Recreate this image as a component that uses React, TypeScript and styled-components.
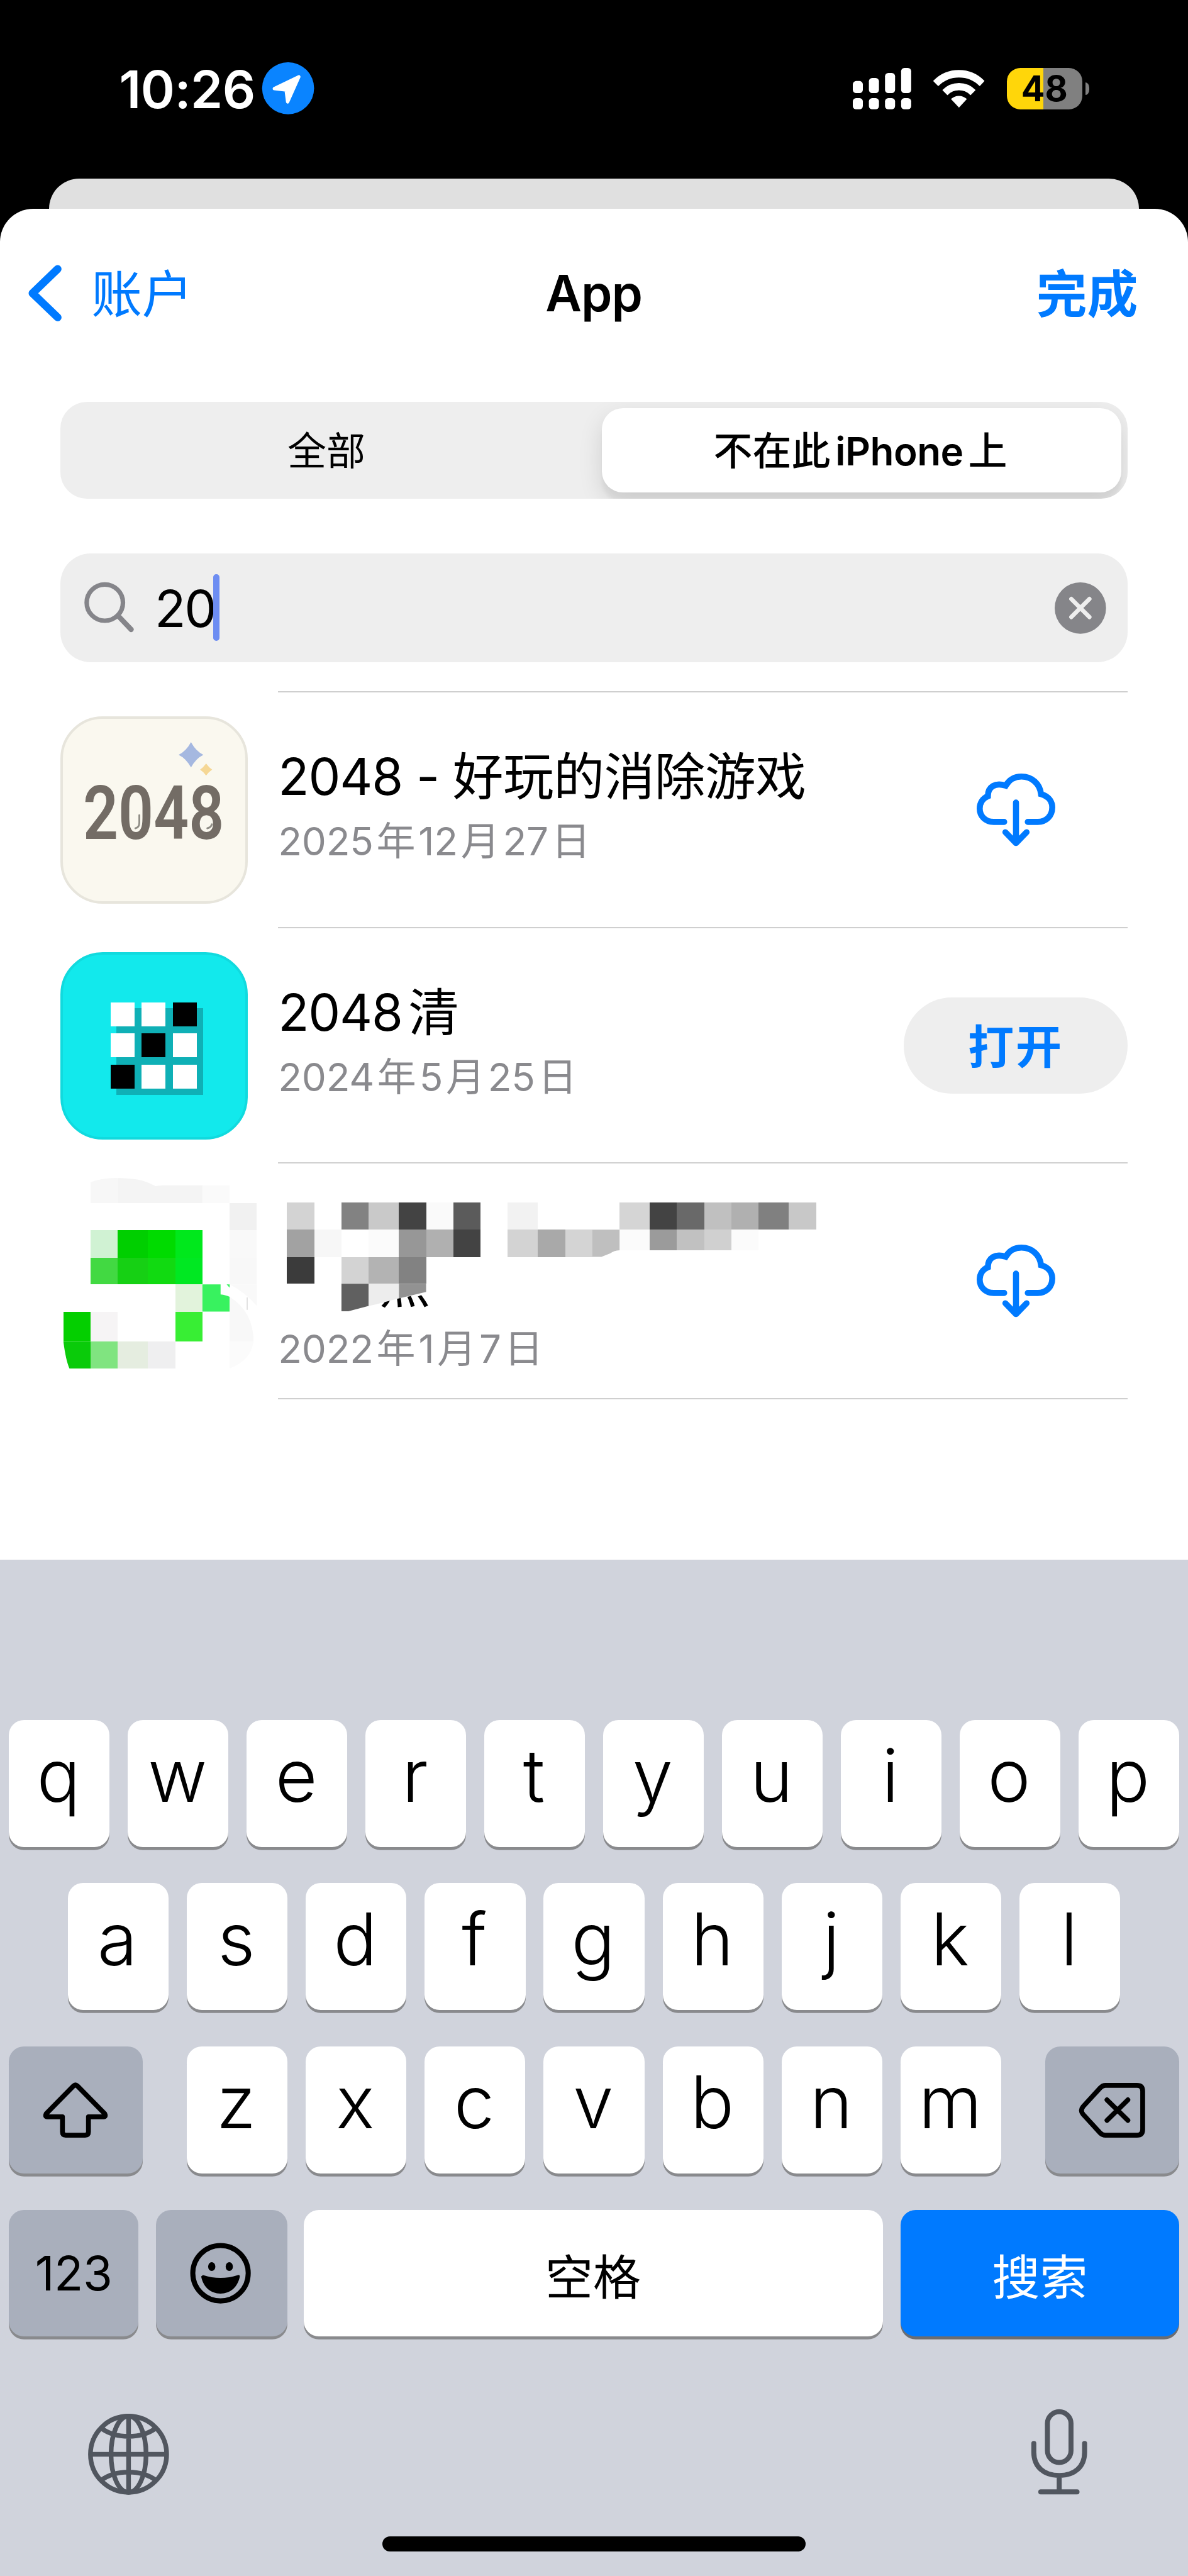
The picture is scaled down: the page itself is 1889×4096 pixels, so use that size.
import React from "react";
import styled, { createGlobalStyle, css } from "styled-components";

/* One iOS point on this 393pt-wide canvas. */
const pt = (n: number) => `${+(n * (1889 / 393)).toFixed(3)}px`;

const BLUE = "#007aff";
const FONT = `Inter, "Noto Sans CJK SC", "Liberation Sans", sans-serif`;

const Global = createGlobalStyle`
  html, body { margin: 0; padding: 0; background: #000; }
  * { box-sizing: border-box; }
  button { border: 0; padding: 0; margin: 0; background: none; font: inherit; color: inherit; }
  svg { display: block; flex: none; }
`;

const Screen = styled.div`
  width: ${pt(393)};
  height: 4096px;
  overflow: hidden;
  display: flex;
  flex-direction: column;
  background: #000;
  color: #000;
  font-family: ${FONT};
`;

/* ---------- status bar ---------- */

const StatusBar = styled.header`
  height: ${pt(59)};
  flex: none;
  display: flex;
  align-items: flex-start;
  justify-content: space-between;
  padding: ${pt(20.7)} ${pt(32.4)} 0 ${pt(39.4)};
`;

const StatusGroup = styled.div<{ $gap: number }>`
  height: ${pt(17.2)};
  display: flex;
  align-items: center;
  gap: ${(p) => pt(p.$gap)};
`;

const Clock = styled.span`
  width: ${pt(44.5)};
  color: #fff;
  font-size: ${pt(17.1)};
  font-weight: 600;
  letter-spacing: ${pt(-0.1)};
  line-height: 1;
  padding-top: ${pt(0.4)};
  white-space: nowrap;
`;

const Battery = styled.div`
  width: ${pt(27.6)};
  height: ${pt(13.7)};
  display: flex;
  align-items: center;
  gap: ${pt(1)};
`;

const BatteryBody = styled.div`
  width: ${pt(25)};
  height: ${pt(13.7)};
  border-radius: ${pt(4.5)};
  background: linear-gradient(90deg, #ffd60a 0 48%, #808080 48% 100%);
  display: flex;
  align-items: center;
  justify-content: center;
  color: #000;
  font-size: ${pt(11.6)};
  font-weight: 700;
  line-height: 1;
`;

const BatteryNub = styled.div`
  width: ${pt(1.4)};
  height: ${pt(4.1)};
  border-radius: 0 ${pt(1.4)} ${pt(1.4)} 0 / 0 50% 50% 0;
  background: #808080;
`;

/* ---------- sheet ---------- */

const BackCard = styled.div`
  flex: none;
  height: ${pt(10)};
  margin: 0 ${pt(16.3)};
  border-radius: ${pt(10)} ${pt(10)} 0 0;
  background: #e0e0e0;
`;

const Sheet = styled.main`
  flex: none;
  height: ${pt(447)};
  border-radius: ${pt(11)} ${pt(11)} 0 0;
  background: #fff;
`;

const NavBar = styled.nav`
  height: ${pt(56)};
  display: grid;
  grid-template-columns: 1fr auto 1fr;
  align-items: center;
  padding: 0 ${pt(16.6)} 0 ${pt(9.3)};
  line-height: 1;
`;

const BackButton = styled.button`
  display: flex;
  align-items: center;
  gap: ${pt(9.4)};
  color: ${BLUE};
  font-size: ${pt(16.8)};
`;

const BackLabel = styled.span`
  padding-top: ${pt(1)};
`;

const NavTitle = styled.h1`
  margin: 0 ${pt(-3.6)} 0 ${pt(3.6)};
  font-size: ${pt(16.5)};
  font-weight: 600;
  letter-spacing: ${pt(-0.2)};
`;

const DoneButton = styled.button`
  justify-self: end;
  padding-top: ${pt(1)};
  color: ${BLUE};
  font-size: ${pt(16.8)};
  font-weight: 700;
`;

const Segments = styled.div`
  height: ${pt(32)};
  margin: ${pt(8)} ${pt(20)} 0;
  padding: ${pt(2)};
  display: grid;
  grid-template-columns: 177fr 172fr;
  border-radius: ${pt(8.8)};
  background: #eeeeee;
  overflow: hidden;
`;

const Segment = styled.button<{ $active?: boolean }>`
  display: flex;
  align-items: center;
  justify-content: center;
  border-radius: ${pt(7)};
  font-size: ${pt(12.9)};
  line-height: 1;
  padding: ${pt(0.8)} ${pt(5)} 0 0;
  ${(p) =>
    p.$active &&
    css`
      padding-right: ${pt(0.8)};
      background: #fff;
      font-weight: 600;
      box-shadow: 0 ${pt(3)} ${pt(8)} rgba(0, 0, 0, 0.12), 0 ${pt(3)} ${pt(1)} rgba(0, 0, 0, 0.04);
    `}
`;

const SearchField = styled.div`
  height: ${pt(36)};
  margin: ${pt(18)} ${pt(20)} 0;
  padding: 0 ${pt(7.1)} 0 ${pt(7.8)};
  display: flex;
  align-items: center;
  border-radius: ${pt(10)};
  background: #eeeeee;
`;

const Query = styled.span`
  margin-left: ${pt(6.8)};
  width: ${pt(19.4)};
  padding-top: ${pt(0.6)};
  font-size: ${pt(16.9)};
  letter-spacing: ${pt(-0.5)};
  line-height: 1;
  white-space: nowrap;
`;

const Caret = styled.i`
  width: ${pt(2)};
  height: ${pt(22)};
  border-radius: ${pt(1)};
  background: #6d8df2;
  margin-right: auto;
`;

/* ---------- app list ---------- */

const AppList = styled.ul`
  list-style: none;
  margin: ${pt(9.67)} ${pt(20)} 0;
  padding: 0;
`;

const AppRow = styled.li`
  height: ${pt(78)};
  display: grid;
  grid-template-columns: ${pt(62)} 1fr;
  column-gap: ${pt(10)};
  align-items: center;
`;

const IconSlot = styled.div`
  padding-top: ${pt(0.66)};
`;

const AppBody = styled.div<{ $last?: boolean }>`
  height: 100%;
  display: flex;
  align-items: center;
  justify-content: space-between;
  border-top: 2px solid #cfcfcf;
  ${(p) =>
    p.$last &&
    css`
      height: calc(100% + 2px);
      border-bottom: 2px solid #cfcfcf;
    `}
`;

const AppText = styled.div`
  display: flex;
  flex-direction: column;
  gap: ${pt(1.9)};
  padding-bottom: ${pt(1.6)};
  white-space: nowrap;
`;

const AppName = styled.div`
  height: ${pt(21)};
  line-height: ${pt(21)};
  font-size: ${pt(16.8)};
`;

const AppDate = styled.div`
  height: ${pt(18)};
  line-height: ${pt(18)};
  font-size: ${pt(12.9)};
  color: #8a8a8e;
`;

const Run = styled.span<{ $track: number; $before: number; $weight?: number }>`
  letter-spacing: ${(p) => pt(p.$track)};
  margin-left: ${(p) => pt(p.$before)};
  ${(p) => p.$weight && css`font-weight: ${p.$weight};`}
`;

const ActionSlot = styled.div`
  width: ${pt(74)};
  display: flex;
  justify-content: center;
`;

const OpenButton = styled.button`
  width: ${pt(74)};
  height: ${pt(32)};
  border-radius: ${pt(16)};
  padding-top: ${pt(0.8)};
  background: #eeeeee;
  color: ${BLUE};
  font-size: ${pt(15.2)};
  font-weight: 700;
  line-height: 1;
  letter-spacing: ${pt(0.6)};
`;

const Tile = styled.div<{ $bg: string; $edge: string }>`
  width: ${pt(62)};
  height: ${pt(62)};
  border-radius: ${pt(14)};
  overflow: hidden;
  background: ${(p) => p.$bg};
  border: ${pt(1)} solid ${(p) => p.$edge};
`;

/* ---------- keyboard ---------- */

const Keyboard = styled.section`
  flex: 1;
  display: flex;
  flex-direction: column;
  align-items: stretch;
  padding: ${pt(53)} ${pt(3)} 0;
  background: #d0d3dc;
`;

const KeyRow = styled.div<{ $inset?: number }>`
  height: ${pt(42)};
  margin-bottom: ${pt(12)};
  padding: 0 ${(p) => pt(p.$inset ?? 0)};
  display: flex;
  gap: ${pt(6)};
`;

const LetterGroup = styled.div`
  flex: 1;
  display: flex;
  gap: ${pt(6)};
  margin: 0 ${pt(8.4)};
`;

const Key = styled.button<{ $w?: number; $tone?: "light" | "dark" | "blue" }>`
  ${(p) => (p.$w ? css`flex: none; width: ${pt(p.$w)};` : css`flex: 1 1 0; min-width: 0;`)}
  height: ${pt(42)};
  display: flex;
  align-items: center;
  justify-content: center;
  border-radius: ${pt(5)};
  line-height: 1;
  background: ${(p) => (p.$tone === "dark" ? "#a9afbc" : p.$tone === "blue" ? BLUE : "#fff")};
  color: ${(p) => (p.$tone === "blue" ? "#fff" : "#000")};
  box-shadow: 0 ${pt(1)} 0 ${(p) => (p.$tone === "blue" ? "#6b6d72" : "#898a8d")};
`;

const SpaceKey = styled(Key)`
  margin-left: ${pt(-0.6)};
`;

const Letter = styled.span`
  font-size: ${pt(24)};
  font-weight: 340;
  padding: 0 ${pt(0.5)} ${pt(5)} 0;
`;

const Label = styled.span<{ $cjk?: boolean }>`
  font-size: ${(p) => pt(p.$cjk ? 15.8 : 15.8)};
  letter-spacing: ${(p) => pt(p.$cjk ? 0 : -0.1)};
  padding-top: ${(p) => pt(p.$cjk ? 3 : 0)};
`;

const DockRow = styled.div`
  height: ${pt(30)};
  margin-top: ${pt(10.9)};
  padding: 0 ${pt(30.2)} 0 ${pt(26.1)};
  display: flex;
  align-items: center;
  justify-content: space-between;
`;

const GlobeSlot = styled.div`
  padding-top: ${pt(2)};
`;

const HomeIndicator = styled.div`
  width: ${pt(140)};
  height: ${pt(5)};
  margin: ${pt(13.1)} auto 0;
  border-radius: ${pt(2.5)};
  background: #000;
`;

/* ---------- drawings: every viewBox is in points ---------- */

type ArtProps = { box: [number, number, number, number]; children: React.ReactNode };
const Art = ({ box, children }: ArtProps) => (
  <svg width={pt(box[2])} height={pt(box[3])} viewBox={box.join(" ")} fill="none" overflow="visible">
    {children}
  </svg>
);

const LocationBadge = () => (
  <Art box={[86.7, 20.7, 17.1, 17.2]}>
    <circle cx="95.25" cy="29.3" r="8.6" fill="#0a84ff" />
    <path d="M98.8 25.5 95.1 33.8 94.6 29.9 90.7 29.4Z" fill="#fff" stroke="#fff" strokeWidth="1.1" strokeLinejoin="round" />
  </Art>
);

const SIGNAL = [26.67, 25.67, 24, 22.33];
const SignalIcon = () => (
  <Art box={[282, 22.33, 19.4, 13.7]}>
    {SIGNAL.map((top, i) => (
      <g key={top} fill="#fff">
        <rect x={282 + i * 5.33} y={top} width="3.33" height={30.67 - top} rx="1.1" />
        <rect x={282 + i * 5.33} y="32.33" width="3.33" height="3.67" rx="1.1" />
      </g>
    ))}
  </Art>
);

const WifiIcon = () => (
  <Art box={[308.7, 22.9, 16.9, 12.5]}>
    <g fill="#fff" stroke="#fff" strokeWidth="0.3" strokeLinejoin="round">
      <path d="M308.85 26.6A11.6 11.6 0 0 1 325.45 26.6L324.05 28.1A9.8 9.8 0 0 0 310.35 28.1Z" />
      <path d="M311.9 29.6A7.5 7.5 0 0 1 322.5 29.6L321 31.1A5.4 5.4 0 0 0 313.4 31.1Z" />
      <path d="M314.75 32.6A3.6 3.6 0 0 1 319.6 32.6L317.2 35.2Z" />
    </g>
  </Art>
);

const BackChevron = () => (
  <Art box={[9.3, 87.5, 11.5, 18.8]}>
    <path d="M19 88.9 10.7 96.9 19 104.9" stroke={BLUE} strokeWidth="2.6" strokeLinecap="round" strokeLinejoin="round" />
  </Art>
);

const SearchIcon = () => (
  <Art box={[28, 192.7, 16.6, 17.2]}>
    <g stroke="#85858a" strokeWidth="1.5" strokeLinecap="round">
      <circle cx="34.8" cy="199.6" r="6" />
      <path d="M39.4 204.2 43.5 208.5" strokeWidth="1.7" />
    </g>
  </Art>
);

const ClearIcon = () => (
  <Art box={[348.9, 192.4, 17, 17]}>
    <circle cx="357.4" cy="201.1" r="8.5" fill="#858589" />
    <path d="M354.4 198.1 360.4 204.1M360.4 198.1 354.4 204.1" stroke="#eee" strokeWidth="1.4" strokeLinecap="round" />
  </Art>
);

const CloudDownload = () => (
  <Art box={[323, 256, 26, 24]}>
    <g stroke={BLUE} strokeWidth="2" strokeLinecap="round" strokeLinejoin="round">
      <path
        d="M332.1 272H328.6C325.8 272 324 270 324 267.6 324 265.7 325 264.2 326.7 263.5 326.7 260.2 329.3 258.9 332.6 260 333.8 258 335.7 257 337.8 257 341.3 257 343.9 259.4 344.3 262.8 346.7 263.5 348 265.2 348 267.2 348 270 346 272 343.2 272H339.9"
        strokeLinejoin="miter"
      />
      <path d="M336 265.6V278.9M332.5 275.4 336 279 339.5 275.4" />
    </g>
  </Art>
);

const TileLabel = styled.div`
  width: ${pt(60)};
  height: ${pt(18)};
  margin-top: ${pt(5.9)};
  display: flex;
  align-items: center;
  justify-content: center;
  font-family: Roboto, "Liberation Sans", sans-serif;
  font-size: ${pt(24.6)};
  font-weight: 600;
  line-height: 1;
  color: #736c65;
  transform: scaleX(0.83);
`;

const SparkleRow = styled.div`
  padding: ${pt(7.6)} 0 0 ${pt(38.2)};
`;

const MergeTile = () => (
  <Tile $bg="#faf8ef" $edge="#e7e5dc">
    <SparkleRow>
      <Art box={[59.2, 245.6, 11.5, 9]}>
        <path d="M63.3 245.6Q64.9 248.6 67.4 249.8 64.9 251 63.3 254 61.7 251 59.2 249.8 61.7 248.6 63.3 245.6Z" fill="#a5b8e0" />
        <path d="M68.3 252.7Q69.2 254 70.3 254.7 69.2 255.4 68.3 256.7 67.4 255.4 66.3 254.7 67.4 254 68.3 252.7Z" fill="#f5d795" />
        <path d="M46.2 269.8V272.3Q46.2 273.9 44.9 274.1M70.2 272.8Q69.9 273.9 68.7 274.1" stroke="#8f8d86" strokeWidth="0.6" strokeLinecap="round" />
      </Art>
    </SparkleRow>
    <TileLabel>2048</TileLabel>
  </Tile>
);

const GRID = [0, 0, 1, 0, 1, 0, 1, 0, 0];
const PuzzleBoard = styled.div`
  width: ${pt(28.6)};
  height: ${pt(28.5)};
  margin: ${pt(15.8)} 0 0 ${pt(15.7)};
  display: grid;
  grid-template-columns: repeat(3, ${pt(7.9)});
  grid-auto-rows: ${pt(7.9)};
  gap: ${pt(2.4)};
  background: linear-gradient(#0fb0b6, #0fb0b6) ${pt(1.9)} ${pt(1.9)} no-repeat;
  padding: 0 ${pt(2)} ${pt(2)} 0;
  box-sizing: content-box;
`;
const PuzzleCell = styled.i<{ $on: boolean }>`
  background: ${(p) => (p.$on ? "#000" : "#fff")};
`;

const PuzzleTile = () => (
  <Tile $bg="#12e9ec" $edge="#11dade">
    <PuzzleBoard>
      {GRID.map((v, i) => (
        <PuzzleCell key={i} $on={v === 1} />
      ))}
    </PuzzleBoard>
  </Tile>
);

type Cell = [x0: number, x1: number, y0: number, y1: number, fill: string];
const Cells = ({ data }: { data: Cell[] }) => (
  <g shapeRendering="crispEdges">
    {data.map(([x0, x1, y0, y1, fill], i) => (
      <rect key={i} x={x0} y={y0} width={x1 - x0} height={y1 - y0} fill={fill} />
    ))}
  </g>
);

const ICON_CELLS: Cell[] = [
  [76, 85, 398, 407, "#f1f1f1"],
  [30, 39, 407, 416, "#d0f2d3"],
  [39, 49, 407, 416, "#00cf00"],
  [49, 58, 407, 416, "#00db00"],
  [58, 67, 407, 416, "#00e81c"],
  [76, 85, 407, 416, "#f9f9f9"],
  [30, 39, 416, 424.9, "#42d942"],
  [39, 49, 416, 424.9, "#16d014"],
  [49, 58, 416, 424.9, "#11da11"],
  [58, 67, 416, 424.9, "#00e822"],
  [76, 85, 416, 424.9, "#f8f8f8"],
  [58, 67, 424.9, 433.9, "#e2f3dc"],
  [21, 30, 433.9, 443.8, "#04cf00"],
  [30, 39, 433.9, 443.8, "#f6f4f5"],
  [58, 67, 433.9, 443.8, "#38ee34"],
  [30, 39, 443.8, 452.7, "#80e480"],
  [39, 49, 443.8, 452.7, "#e5ede0"],
  [49, 58, 443.8, 452.7, "#efeff0"],
];

const MosaicIcon = () => (
  <Art box={[20, 393, 62, 62]}>
    <path d="M30 391.1Q34 389.6 39 389.7V398H30Z" fill="#f7f7f7" />
    <path d="M39 389.7C45 389.8 48 390.4 51.5 392.4L54 392.1H67V398H39Z" fill="#f4f4f4" />
    <path d="M67 392.1H76V398H67Z" fill="#fafafa" />
    <Cells data={ICON_CELLS} />
    <path d="M67 424.9H73V428.2Q74.8 428.4 76 429V433.9H67Z" fill="#38f25f" />
    <path d="M75 424.9H76V426Z" fill="#38f25f" />
    <path d="M76 424.9H85V432Q81 427.4 76 424.9Z" fill="#f9f9f9" />
    <path d="M76 429Q83.9 434 83.9 443.8H76Z" fill="#f8f8f8" />
    <path d="M76 443.8H83.9Q83 450 76 452.7Z" fill="#fbfbfb" />
    <path d="M81.8 429.2V433.3" stroke="#dedede" strokeWidth="0.35" />
    <path d="M21 443.8H30V452.7H23Q21.8 450 21 443.8Z" fill="#0acb0a" />
  </Art>
);

const NAME_CELLS: Cell[] = [
  [95, 104, 398, 407, "#d3d3d3"],
  [113, 122, 398, 407, "#828282"],
  [122, 132, 398, 407, "#c9c9c9"],
  [132, 141, 398, 407, "#434343"],
  [141, 150, 398, 407, "#fafafa"],
  [150, 159, 398, 407, "#5b5b5b"],
  [168, 178, 398, 407, "#f2f2f2"],
  [205, 215, 398, 407, "#d5d5d5"],
  [215, 224, 398, 407, "#434343"],
  [224, 233, 398, 407, "#696969"],
  [233, 242, 398, 407, "#c0c0c0"],
  [242, 251, 398, 407, "#b0b0b0"],
  [251, 261, 398, 407, "#808080"],
  [261, 270, 398, 407, "#c8c8c8"],
  [95, 104, 407, 416, "#a2a2a2"],
  [104, 113, 407, 416, "#f7f7f7"],
  [122, 132, 407, 416, "#fbfbfb"],
  [132, 141, 407, 416, "#979797"],
  [141, 150, 407, 416, "#b0b0b0"],
  [150, 159, 407, 416, "#434343"],
  [168, 178, 407, 416, "#d3d3d3"],
  [178, 187, 407, 416, "#a9a9a9"],
  [187, 196, 407, 416, "#d4d4d4"],
  [205, 215, 407, 413.7, "#fbfbfb"],
  [215, 224, 407, 413.7, "#9b9b9b"],
  [224, 233, 407, 413.7, "#c1c1c1"],
  [233, 242, 407, 413.7, "#d0d0d0"],
  [242, 251, 407, 413.7, "#fbfbfb"],
  [95, 104, 416, 424.9, "#3b3b3b"],
  [113, 122, 416, 424.9, "#d3d3d3"],
  [122, 132, 416, 424.9, "#b3b3b3"],
  [132, 141, 416, 424.9, "#828282"],
];

const MosaicName = () => (
  <Art box={[92, 390.5, 180, 45.1]}>
    <Cells data={NAME_CELLS} />
    <path d="M196 407H205V413.8Q203 413.9 202 414.8L199 416H196Z" fill="#bfbfbf" />
    <path d="M113 424.9H122V432.2L115.3 434H113Z" fill="#606060" />
    <path d="M122 424.9H132V429.7L124 431.8 122 432.2Z" fill="#ededed" />
    <path d="M132 424.9H141V427.6L132 429.7Z" fill="#929292" />
    <clipPath id="uncovered">
      <path d="M122 432.2 124 431.8 132 429.7 141 427.6H144V436H122Z" />
    </clipPath>
    <text x="125.5" y="431.3" fontSize="17" fill="#000" fontFamily="Noto Sans CJK SC, sans-serif" clipPath="url(#uncovered)">
      点
    </text>
  </Art>
);

const ShiftIcon = () => (
  <Art box={[14.5, 688.9, 21.2, 18]}>
    <path
      d="M24.25 689.9Q24.9 689.3 25.55 689.9L34.6 699.1Q35.1 700.1 34.2 700.1H29.2V705.1Q29.2 706.2 28.1 706.2H21.7Q20.6 706.2 20.6 705.1V700.1H15.6Q14.7 700.1 15.2 699.1Z"
      stroke="#000"
      strokeWidth="1.6"
      strokeLinejoin="round"
    />
  </Art>
);

const DeleteIcon = () => (
  <Art box={[356.9, 689, 21.8, 18]}>
    <g stroke="#000" strokeWidth="1.6" strokeLinecap="round" strokeLinejoin="round">
      <path d="M365.6 689.8H376Q377.9 689.8 377.9 691.7V704.4Q377.9 706.3 376 706.3H365.6Q364.6 706.3 363.9 705.6L358.2 699.4Q357.1 698.1 358.2 696.8L363.9 690.6Q364.6 689.8 365.6 689.8Z" />
      <path d="M366.1 694.6 373 701.4M373 694.6 366.1 701.4" />
    </g>
  </Art>
);

const EmojiIcon = () => (
  <Art box={[63.3, 741.9, 20, 20.2]}>
    <circle cx="73" cy="752" r="9.17" stroke="#000" strokeWidth="1.67" />
    <ellipse cx="70.1" cy="749.8" rx="1.2" ry="1.45" fill="#000" />
    <ellipse cx="75.9" cy="749.8" rx="1.2" ry="1.45" fill="#000" />
    <path
      d="M67.2 752.6Q73 754.5 78.8 752.6 79.4 752.4 79.4 753.1C78.7 756.6 76.3 758.75 73 758.75 69.7 758.75 67.3 756.6 66.6 753.1 66.6 752.4 67.2 752.6ZM67.65 753.7Q67.7 754.4 68.2 755 73 756.3 77.8 755 78.3 754.4 78.35 753.7 73 755.2 67.65 753.7Z"
      fill="#000"
      fillRule="evenodd"
    />
  </Art>
);

const GlobeIcon = () => (
  <Art box={[29, 798.5, 26.8, 26.8]}>
    <g stroke="#51565f" strokeWidth="1.55">
      <circle cx="42.4" cy="811.9" r="12.6" />
      <ellipse cx="42.4" cy="811.9" rx="5.8" ry="12.6" />
      <path d="M42.4 799.2V824.6M29.7 811.9H55.1M33.2 803.2Q37 806 42.4 806 47.8 806 51.6 803.2M33.2 820.6Q37 817.8 42.4 817.8 47.8 817.8 51.6 820.6" />
    </g>
  </Art>
);

const MicIcon = () => (
  <Art box={[341.2, 796.6, 18.6, 28.2]}>
    <g stroke="#51565f" strokeWidth="1.65" strokeLinecap="round">
      <rect x="346.5" y="797.6" width="7.8" height="16.8" rx="3.9" />
      <path d="M342 808.1V811C342 815.8 345.3 818.7 350.4 818.7 355.5 818.7 358.8 815.8 358.8 811V808.1M350.4 818.9V824.1M344.3 824.1H356.3" />
    </g>
  </Art>
);

/* Sets a mixed string: figures and Han characters are spaced apart. */
type MixedProps = { text: string; digit: number; han: number; gap: number; hanWeight?: number };
const Mixed = ({ text, digit, han, gap, hanWeight }: MixedProps) => {
  const runs = text.match(/[\u4e00-\u9fff]+|[^\u4e00-\u9fff]+/g) ?? [];
  return (
    <>
      {runs.map((run, i) => {
        const isHan = /[\u4e00-\u9fff]/.test(run);
        return (
          <Run key={i} $track={isHan ? han : digit} $before={i ? gap : 0} $weight={isHan ? hanWeight : undefined}>
            {run}
          </Run>
        );
      })}
    </>
  );
};

const APPS = [
  {
    icon: <MergeTile />,
    name: (
      <AppName>
        <Mixed text="2048 - 好玩的消除游戏" digit={-0.22} han={-0.1} gap={0} />
      </AppName>
    ),
    date: "2025年12月27日",
    action: <CloudDownload />,
  },
  {
    icon: <PuzzleTile />,
    name: (
      <AppName>
        <Mixed text="2048清" digit={-0.25} han={0} gap={2} />
      </AppName>
    ),
    date: "2024年5月25日",
    action: <OpenButton>打开</OpenButton>,
  },
  { icon: <MosaicIcon />, name: <MosaicName />, date: "2022年1月7日", action: <CloudDownload /> },
];

const letters = (s: string) =>
  s.split("").map((c) => (
    <Key key={c}>
      <Letter>{c}</Letter>
    </Key>
  ));

export default function App() {
  return (
    <>
      <Global />
      <Screen>
        <StatusBar>
          <StatusGroup $gap={2.8}>
            <Clock>10:26</Clock>
            <LocationBadge />
          </StatusGroup>
          <StatusGroup $gap={7.35}>
            <SignalIcon />
            <WifiIcon />
            <Battery>
              <BatteryBody>48</BatteryBody>
              <BatteryNub />
            </Battery>
          </StatusGroup>
        </StatusBar>
        <BackCard />
        <Sheet>
          <NavBar>
            <BackButton>
              <BackChevron />
              <BackLabel>账户</BackLabel>
            </BackButton>
            <NavTitle>App</NavTitle>
            <DoneButton>完成</DoneButton>
          </NavBar>
          <Segments>
            <Segment>全部</Segment>
            <Segment $active>
              <Mixed text="不在此iPhone上" digit={-0.1} han={0} gap={1.6} hanWeight={500} />
            </Segment>
          </Segments>
          <SearchField>
            <SearchIcon />
            <Query>20</Query>
            <Caret />
            <ClearIcon />
          </SearchField>
          <AppList>
            {APPS.map((app, i) => (
              <AppRow key={app.date}>
                <IconSlot>{app.icon}</IconSlot>
                <AppBody $last={i === APPS.length - 1}>
                  <AppText>
                    {app.name}
                    <AppDate>
                      <Mixed text={app.date} digit={-0.05} han={0} gap={1} />
                    </AppDate>
                  </AppText>
                  <ActionSlot>{app.action}</ActionSlot>
                </AppBody>
              </AppRow>
            ))}
          </AppList>
        </Sheet>
        <Keyboard>
          <KeyRow>{letters("qwertyuiop")}</KeyRow>
          <KeyRow $inset={19.4}>{letters("asdfghjkl")}</KeyRow>
          <KeyRow>
            <Key $w={44.3} $tone="dark">
              <ShiftIcon />
            </Key>
            <LetterGroup>{letters("zxcvbnm")}</LetterGroup>
            <Key $w={44.3} $tone="dark">
              <DeleteIcon />
            </Key>
          </KeyRow>
          <KeyRow>
            <Key $w={42.7} $tone="dark">
              <Label>123</Label>
            </Key>
            <Key $w={43.3} $tone="dark">
              <EmojiIcon />
            </Key>
            <SpaceKey>
              <Label $cjk>空格</Label>
            </SpaceKey>
            <Key $w={92} $tone="blue">
              <Label $cjk>搜索</Label>
            </Key>
          </KeyRow>
          <DockRow>
            <GlobeSlot>
              <GlobeIcon />
            </GlobeSlot>
            <MicIcon />
          </DockRow>
          <HomeIndicator />
        </Keyboard>
      </Screen>
    </>
  );
}
